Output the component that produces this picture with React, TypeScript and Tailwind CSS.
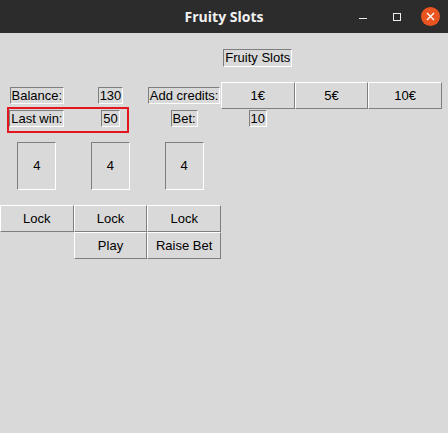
import { ReactNode } from "react";

const font = { fontFamily: '"Liberation Sans", Arial, sans-serif' };

// tk style label: sunken, 1px border
function Label({ children }: { children: ReactNode }) {
  return (
    <div className="border border-t-[#7f7f7f] border-l-[#7f7f7f] border-b-white border-r-white px-px text-[13px] leading-[15px] text-black whitespace-nowrap">
      {children}
    </div>
  );
}

function Btn({ children }: { children: ReactNode }) {
  return (
    <button className="h-[27px] w-full border border-t-white border-l-white border-b-[#7f7f7f] border-r-[#7f7f7f] bg-[#d9d9d9] text-[13px] text-black">
      {children}
    </button>
  );
}

function Reel({ value }: { value: number }) {
  return (
    <div className="flex h-[48px] w-[39px] items-center justify-center border border-t-[#7f7f7f] border-l-[#7f7f7f] border-b-white border-r-white text-[13px] text-black">
      {value}
    </div>
  );
}

function TitleBar() {
  return (
    <div className="relative flex h-[33px] items-center justify-center bg-[#2c2c2c]">
      <span
        className="text-[14px] font-bold text-[#f2f2f2]"
        style={{ fontFamily: '"Open Sans", "Noto Sans", sans-serif' }}
      >
        Fruity Slots
      </span>
      <div className="absolute right-0 top-0 flex h-[33px] items-center">
        <div className="flex w-[34px] justify-center pt-[3px]">
          <div className="h-px w-[8px] bg-[#eeeeee]" />
        </div>
        <div className="flex w-[34px] justify-center">
          <div className="h-[8px] w-[8px] border border-[#eeeeee]" />
        </div>
        <div className="flex w-[34px] justify-center pr-[1px]">
          <div className="flex h-[19px] w-[19px] items-center justify-center rounded-full bg-[#e95420]">
            <svg width="9" height="9" viewBox="0 0 9 9">
              <path d="M1 1 L8 8 M8 1 L1 8" stroke="white" strokeWidth="1.4" />
            </svg>
          </div>
        </div>
      </div>
    </div>
  );
}

export default function App() {
  const reels = [4, 4, 4];
  return (
    <div className="h-[433px] w-[448px] bg-[#d9d9d9]" style={font}>
      <TitleBar />
      <div className="relative w-[442px]">
        <div className="grid grid-cols-6">
          {/* row 0 */}
          <div className="col-start-4 flex h-[49px] items-center justify-center">
            <div className="border border-t-[#7f7f7f] border-l-[#7f7f7f] border-b-white border-r-white px-px text-[13px] leading-[16px] text-black">
              Fruity Slots
            </div>
          </div>
          <div className="col-span-2" />

          {/* row 1 */}
          <div className="flex items-center justify-center"><Label>Balance:</Label></div>
          <div className="flex items-center justify-center"><Label>130</Label></div>
          <div className="flex items-center justify-center"><Label>Add credits:</Label></div>
          <Btn>1€</Btn>
          <Btn>5€</Btn>
          <Btn>10€</Btn>

          {/* row 2 */}
          <div className="flex h-[19px] items-center justify-center"><Label>Last win:</Label></div>
          <div className="flex items-center justify-center"><Label>50</Label></div>
          <div className="flex items-center justify-center"><Label>Bet:</Label></div>
          <div className="flex items-center justify-center"><Label>10</Label></div>
          <div className="col-span-2" />

          {/* row 3 */}
          {reels.map((r, i) => (
            <div key={i} className="flex justify-center pt-[14px] pb-[15px]">
              <Reel value={r} />
            </div>
          ))}
          <div className="col-span-3" />

          {/* row 4 */}
          <Btn>Lock</Btn>
          <Btn>Lock</Btn>
          <Btn>Lock</Btn>
          <div className="col-span-3" />

          {/* row 5 */}
          <div />
          <Btn>Play</Btn>
          <Btn>Raise Bet</Btn>
        </div>

        {/* annotation */}
        <div className="absolute left-[7px] top-[74px] h-[26px] w-[122px] border-2 border-[#e3161d]" />
      </div>
    </div>
  );
}
